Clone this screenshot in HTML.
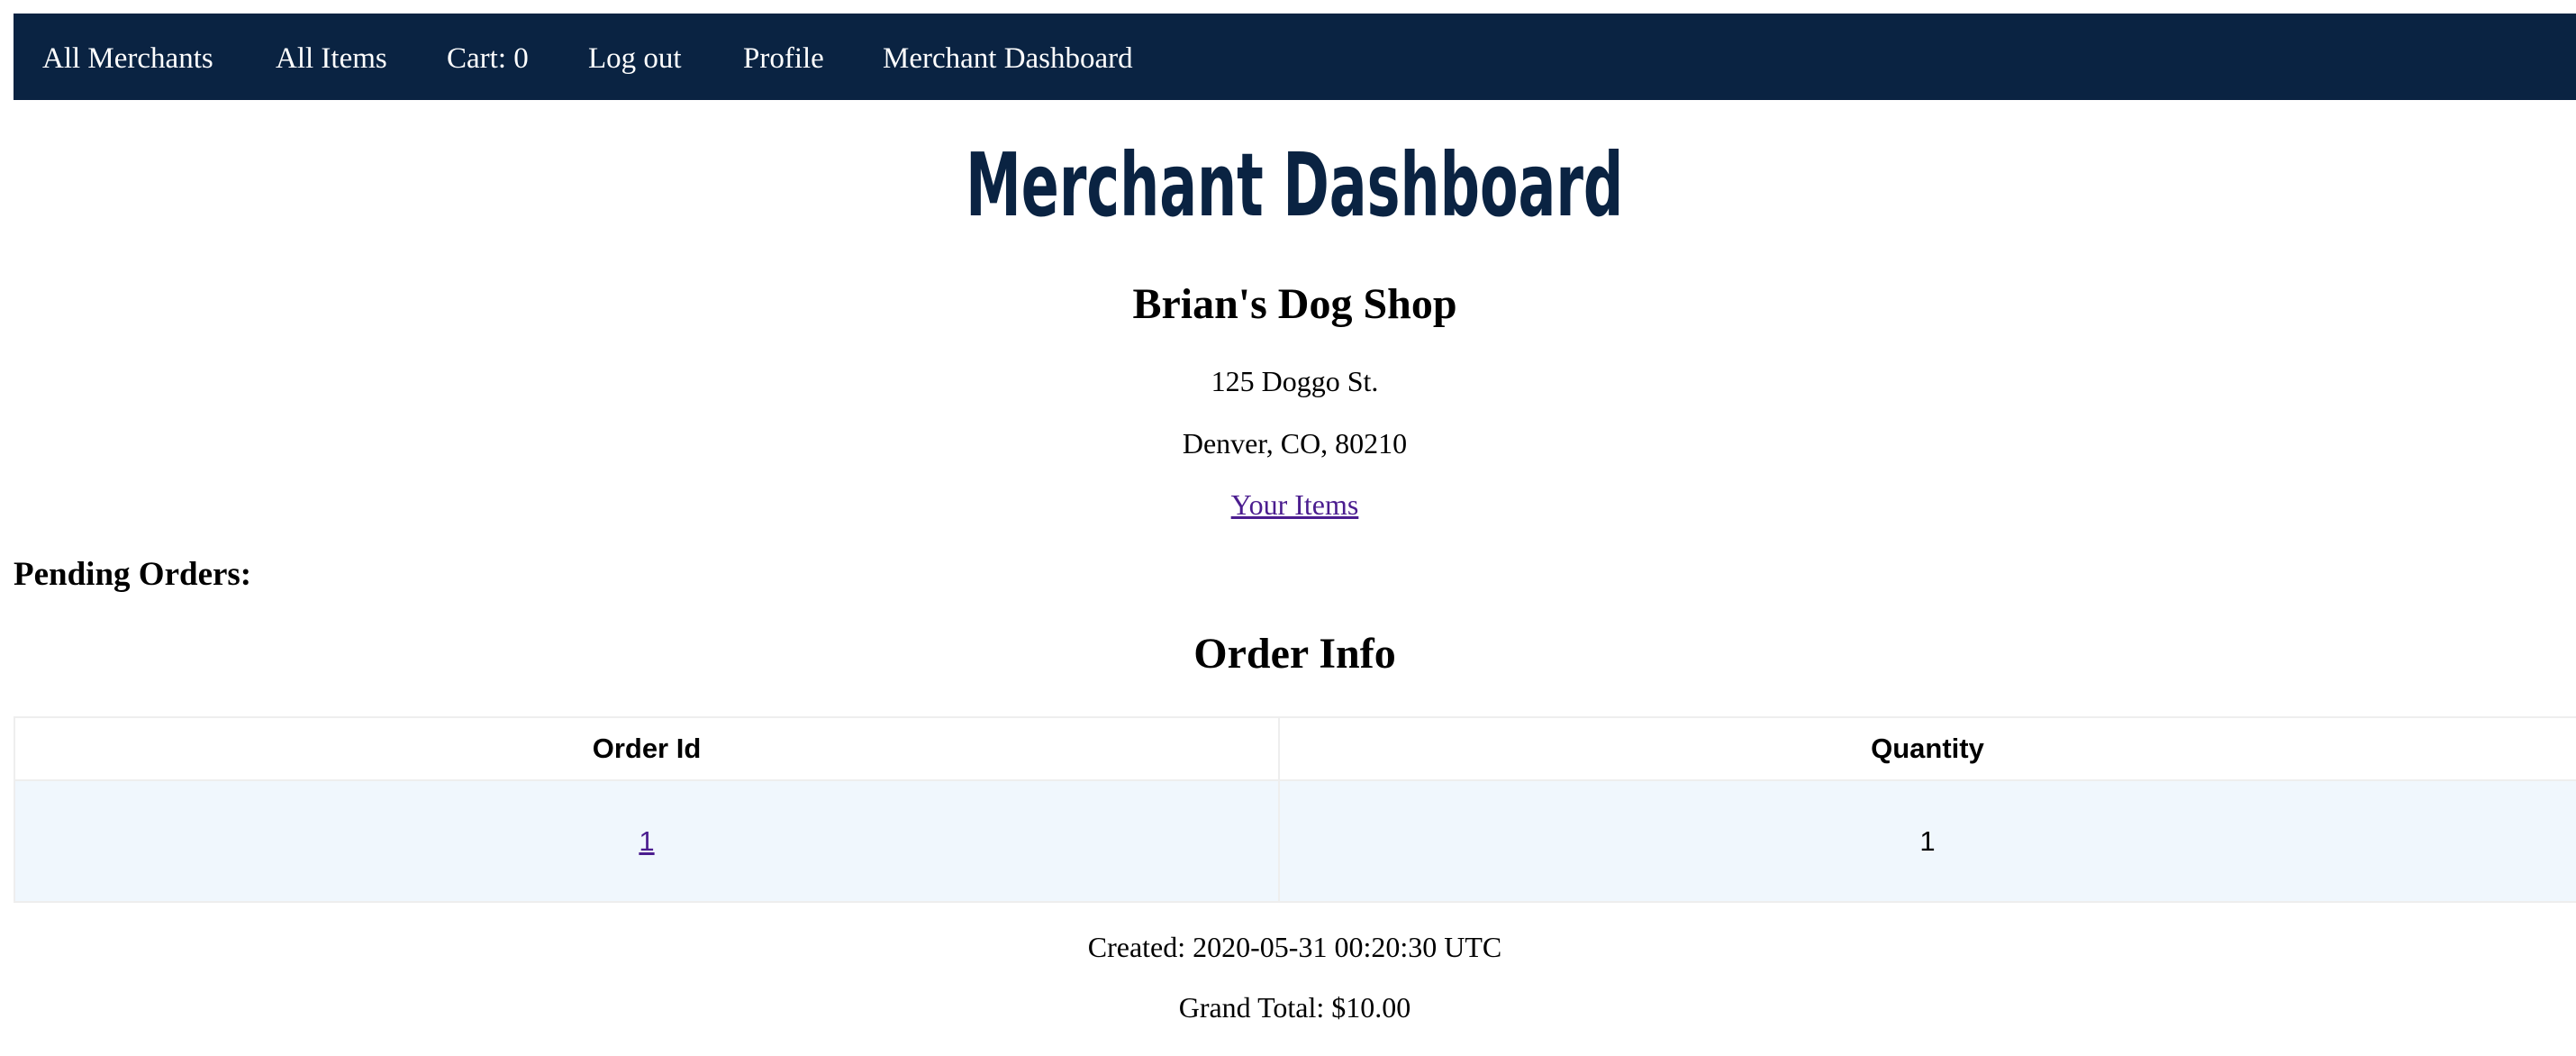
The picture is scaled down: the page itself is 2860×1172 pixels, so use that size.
<!DOCTYPE html>
<html><head><meta charset="utf-8"><style>
html,body{margin:0;padding:0;background:#fff;width:2860px;height:1172px;overflow:hidden}
body{font-family:"Liberation Serif",serif;color:#000;position:relative}
.nav{position:absolute;left:15px;top:15px;width:2845px;height:96px;background:#0a2342}
.nav span{position:absolute;top:2px;line-height:96px;color:#fff;font-size:33px;white-space:nowrap}
.c{position:absolute;left:15px;width:2845px;text-align:center;white-space:nowrap}
h1{display:inline-block;font-family:"DejaVu Sans Condensed","DejaVu Sans",sans-serif;font-weight:bold;color:#0a2342;font-size:97px;margin:0;transform:scaleX(0.71);transform-origin:center}
a{color:#4b1d8f}
table{position:absolute;left:15px;top:795px;border-collapse:collapse;font-family:"Liberation Sans",sans-serif;font-size:31px;table-layout:fixed;width:2870px}
td,th{border:2px solid #eee;text-align:center;padding:0}
</style></head><body>
<div class="nav">
<span style="left:32px">All Merchants</span>
<span style="left:291px">All Items</span>
<span style="left:481px">Cart: 0</span>
<span style="left:638px">Log out</span>
<span style="left:810px">Profile</span>
<span style="left:965px">Merchant Dashboard</span>
</div>
<div class="c" style="top:150px;height:112px;line-height:112px"><h1>Merchant Dashboard</h1></div>
<div class="c" style="top:310px;font-size:48px;font-weight:bold;line-height:56px">Brian's Dog Shop</div>
<div class="c" style="top:403px;font-size:32px;line-height:40px">125 Doggo St.</div>
<div class="c" style="top:472px;font-size:32px;line-height:40px">Denver, CO, 80210</div>
<div class="c" style="top:540px;font-size:32px;line-height:40px"><a href="#">Your Items</a></div>
<div style="position:absolute;left:15px;top:616px;font-size:37px;font-weight:bold;line-height:44px">Pending Orders:</div>
<div class="c" style="top:698px;font-size:48px;font-weight:bold;line-height:56px">Order Info</div>
<table>
<colgroup><col style="width:1404px"><col style="width:1466px"></colgroup>
<tr style="height:70px"><th>Order Id</th><th style="padding-right:26px">Quantity</th></tr>
<tr style="height:135px;background:#f0f7fd"><td><a href="#">1</a></td><td style="padding-right:26px">1</td></tr>
</table>
<div class="c" style="top:1031px;font-size:32px;line-height:40px">Created: 2020-05-31 00:20:30 UTC</div>
<div class="c" style="top:1098px;font-size:32px;line-height:40px">Grand Total: $10.00</div>
</body></html>
